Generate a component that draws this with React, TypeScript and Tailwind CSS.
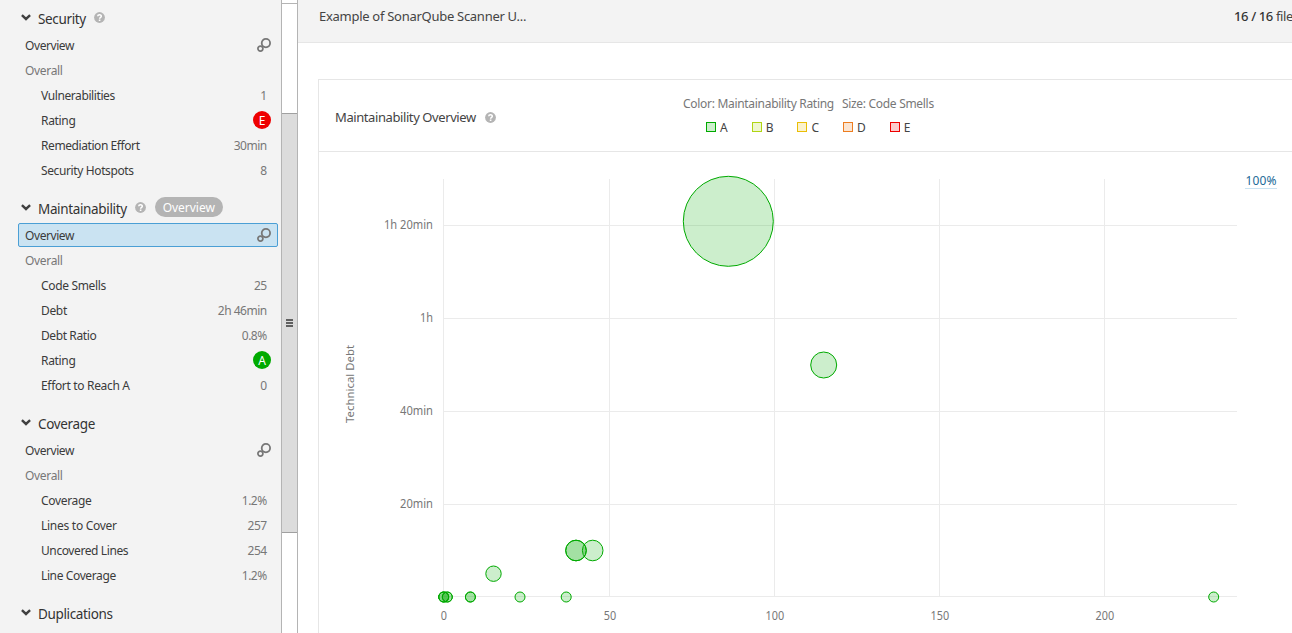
import React from "react";

type Row = { name: string; value?: string; rating?: "A" | "E"; tracking?: string };

type Section = { title: string; help?: boolean; selected?: boolean; rows: Row[] };

const sections: Section[] = [
  {
    title: "Security",
    help: true,
    rows: [
      { name: "Vulnerabilities", value: "1", tracking: "tracking-[-0.4px]" },
      { name: "Rating", rating: "E" },
      { name: "Remediation Effort", value: "30min", tracking: "tracking-[-0.42px]" },
      { name: "Security Hotspots", value: "8", tracking: "tracking-[-0.38px]" },
    ],
  },
  {
    title: "Maintainability",
    help: true,
    selected: true,
    rows: [
      { name: "Code Smells", value: "25" },
      { name: "Debt", value: "2h 46min" },
      { name: "Debt Ratio", value: "0.8%", tracking: "tracking-[-0.4px]" },
      { name: "Rating", rating: "A" },
      { name: "Effort to Reach A", value: "0" },
    ],
  },
  {
    title: "Coverage",
    rows: [
      { name: "Coverage", value: "1.2%" },
      { name: "Lines to Cover", value: "257", tracking: "tracking-[-0.27px]" },
      { name: "Uncovered Lines", value: "254", tracking: "tracking-[-0.4px]" },
      { name: "Line Coverage", value: "1.2%", tracking: "tracking-[-0.38px]" },
    ],
  },
];

const legend = [
  { label: "A", box: "border-[#00aa00] bg-[#cceecc]" },
  { label: "B", box: "border-[#b0d513] bg-[#eff7d0]" },
  { label: "C", box: "border-[#eabe06] bg-[#fbf2cd]" },
  { label: "D", box: "border-[#ed7d20] bg-[#fbe5d2]" },
  { label: "E", box: "border-[#ee0000] bg-[#fccccc]" },
];

const xTicks = [
  { x: 443.5, label: "0" },
  { x: 609.5, label: "50" },
  { x: 774.5, label: "100" },
  { x: 939.5, label: "150" },
  { x: 1104.5, label: "200" },
];

const yTicks = [
  { y: 225.5, label: "1h 20min", width: 49 },
  { y: 318.5, label: "1h", width: 13 },
  { y: 411.5, label: "40min", width: 33 },
  { y: 504.5, label: "20min", width: 33 },
];

const bubbles = [
  [728.3, 221.3, 45],
  [823.7, 365, 13],
  [576, 550.5, 10.3],
  [576, 550.5, 10.3],
  [592.7, 550.5, 10.3],
  [493.5, 573.7, 7.7],
  [443.7, 597, 5],
  [443.7, 597, 5],
  [443.7, 597, 5],
  [447.3, 597, 5],
  [447.3, 597, 5],
  [470.4, 597, 5],
  [470.4, 597, 5],
  [520, 597, 5],
  [566.2, 597, 5],
  [1213.7, 597, 5],
];

function Chevron() {
  return (
    <svg width="10" height="7" viewBox="0 0 10 7" className="-mt-px shrink-0">
      <path d="M0.9 1.2 L5 5 L9.1 1.2" fill="none" stroke="#404040" strokeWidth="2.4" />
    </svg>
  );
}

function Help() {
  return (
    <svg width="11" height="11" viewBox="0 0 11 11" className="block shrink-0">
      <circle cx="5.5" cy="5.5" r="5.4" fill="#b4b4b4" />
      <path
        d="M3.7 4.2 C3.8 2.2 7.3 2.1 7.3 4.2 C7.3 5.4 5.6 5.2 5.6 6.8"
        fill="none"
        stroke="#fff"
        strokeWidth="1.5"
      />
      <rect x="4.8" y="7.5" width="1.6" height="1.5" fill="#fff" />
    </svg>
  );
}

function BubblesIcon() {
  return (
    <svg width="14" height="14" viewBox="0 0 14 14" fill="none" stroke="#777" className="block shrink-0">
      <circle cx="8.9" cy="5.1" r="4.2" strokeWidth="1.8" />
      <circle cx="3.4" cy="10.6" r="2.5" strokeWidth="1.7" />
    </svg>
  );
}

function Heading({ section }: { section: Section }) {
  return (
    <div className="flex h-10 items-center pt-[10px] pl-[21px]">
      <Chevron />
      <h3 className="ml-[7px] pt-px text-[13.5px] leading-5 tracking-[-0.35px] text-[#333]">{section.title}</h3>
      {section.help && (
        <span className="ml-2 -mt-[2px]">
          <Help />
        </span>
      )}
      {section.selected && (
        <span className="ml-[9px] -mt-[2px] flex h-5 w-[68px] items-center justify-center rounded-full bg-[#b4b4b4] pt-px text-[12px] tracking-[-0.03px] text-white">
          Overview
        </span>
      )}
    </div>
  );
}

function MetricSection({ section }: { section: Section }) {
  return (
    <section className="pb-px">
      <Heading section={section} />
      <div className="ml-[18px] flex w-[260px] flex-col gap-px text-[12px] tracking-[-0.33px] text-[#3b3b3b]">
        <div
          className={
            section.selected
              ? "flex h-6 items-center justify-between rounded-[2px] border border-[#4b9fd5] bg-[#cae3f2] px-[6px]"
              : "flex h-6 items-center justify-between border border-transparent px-[6px]"
          }
        >
          <span className="pt-[2px] tracking-[-0.42px]">Overview</span>
          <span className="-mt-px">
            <BubblesIcon />
          </span>
        </div>
        <div className="flex h-6 items-center px-[7px] pt-[2px] text-[#777]">Overall</div>
        {section.rows.map((row) => (
          <div key={row.name} className="flex h-6 items-center justify-between pt-[2px] pr-[7px] pl-[23px]">
            <span className={row.tracking}>{row.name}</span>
            {row.rating ? (
              <span
                className={
                  row.rating === "A"
                    ? "-mt-[2px] flex size-[18px] items-center justify-center rounded-full bg-[#00aa00] pt-px text-white"
                    : "-mt-[2px] flex size-[18px] items-center justify-center rounded-full bg-[#ee0000] pt-px text-white"
                }
              >
                {row.rating}
              </span>
            ) : (
              <span className="mr-[4.3px] tracking-[-0.5px] text-[#777]">{row.value}</span>
            )}
          </div>
        ))}
      </div>
    </section>
  );
}

function BubbleChart() {
  return (
    <svg width="973" height="481" viewBox="319 152 973 481" className="block text-[12px]">
      <g stroke="#ebebeb">
        {xTicks.map((t) => (
          <line key={t.label} x1={t.x} x2={t.x} y1="179" y2="597" />
        ))}
        {yTicks.map((t) => (
          <line key={t.label} x1="443" x2="1237" y1={t.y} y2={t.y} />
        ))}
        <line x1="443" x2="1237" y1="596.5" y2="596.5" />
      </g>
      <g fill="#777">
        {xTicks.map((t) => (
          <text
            key={t.label}
            x={t.x + 0.4}
            y="620"
            textAnchor="middle"
            textLength={t.label.length * 6.2}
            lengthAdjust="spacingAndGlyphs"
          >
            {t.label}
          </text>
        ))}
        {yTicks.map((t) => (
          <text
            key={t.label}
            x={433 - t.width}
            y={t.y + 3.5}
            textLength={t.width}
            lengthAdjust="spacingAndGlyphs"
          >
            {t.label}
          </text>
        ))}
        <text
          transform="translate(354 384) rotate(-90)"
          textAnchor="middle"
          textLength="78"
          fontSize="11.5"
          lengthAdjust="spacingAndGlyphs"
        >
          Technical Debt
        </text>
      </g>
      <g fill="#00aa00" fillOpacity="0.2" stroke="#00aa00">
        {bubbles.map(([cx, cy, r], i) => (
          <circle key={i} cx={cx} cy={cy} r={r} />
        ))}
      </g>
    </svg>
  );
}

export default function App() {
  return (
    <div className="flex h-[633px] w-[1292px] overflow-hidden bg-white font-['Noto_Sans','Open_Sans',sans-serif]">
      <aside className="h-full w-[281px] shrink-0 overflow-hidden bg-[#f3f3f3]">
        <div className="-mt-[7px]">
          {sections.map((section) => (
            <MetricSection key={section.title} section={section} />
          ))}
          <Heading section={{ title: "Duplications", rows: [] }} />
        </div>
      </aside>

      <div className="flex h-full w-[17px] shrink-0 flex-col border-x border-[#b4b4b4] bg-white">
        <div className="h-1 shrink-0 border-b border-[#b4b4b4] bg-white" />
        <div className="h-[109px] shrink-0" />
        <div className="flex h-[420px] shrink-0 flex-col items-center justify-center gap-px border-y border-[#a0a0a0] bg-[#dcdcdc]">
          <div className="h-[2px] w-[7px] bg-[#606060]" />
          <div className="h-[2px] w-[7px] bg-[#606060]" />
          <div className="h-[2px] w-[7px] bg-[#606060]" />
        </div>
      </div>

      <main className="min-w-0 flex-1 overflow-hidden">
        <header className="flex h-[43px] justify-between border-b border-[#e6e6e6] bg-[#f3f3f3] pt-[6px] pl-[21px] text-[13px] leading-5 text-[#444]">
          <span className="whitespace-nowrap tracking-[-0.28px]">Example of SonarQube Scanner U...</span>
          <span className="w-[58px] whitespace-nowrap tracking-[-0.37px]">
            <span className="font-medium text-[#333]">16 / 16</span> file
          </span>
        </header>

        <div className="mt-9 ml-5 border-t border-l border-[#e6e6e6]">
          <div className="flex h-[72px] border-b border-[#e6e6e6]">
            <div className="flex w-[364px] items-center pt-[5px] pl-4">
              <span className="text-[13px] tracking-[-0.41px] text-[#444]">Maintainability Overview</span>
              <span className="-mt-[2px] ml-[9px]">
                <Help />
              </span>
            </div>
            <div className="flex flex-col pt-4 text-[12px] leading-4">
              <div className="flex gap-2 whitespace-nowrap tracking-[-0.3px] text-[#777]">
                <span>Color: Maintainability Rating</span>
                <span>Size: Code Smells</span>
              </div>
              <div className="mt-2 flex gap-6 pl-[23px] text-[#444]">
                {legend.map((item) => (
                  <span key={item.label} className="flex items-center gap-1">
                    <span className={`-mt-[2px] size-[10px] border ${item.box}`} />
                    <span>{item.label}</span>
                  </span>
                ))}
              </div>
            </div>
          </div>
          <div className="relative">
            <BubbleChart />
            <a className="absolute top-[21px] left-[926px] flex h-4 w-8 items-center justify-center border-b border-[#cae3f2] text-[12px] tracking-[0.1px] text-[#236a97]">
              100%
            </a>
          </div>
        </div>
      </main>
    </div>
  );
}
